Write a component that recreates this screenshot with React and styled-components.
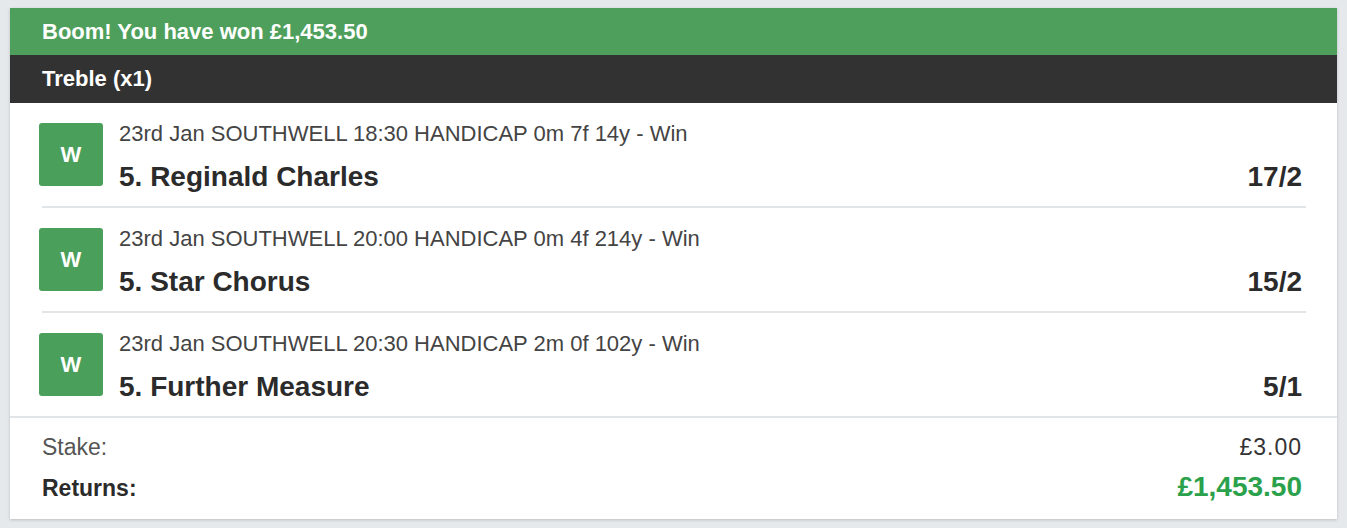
import React from "react";
import styled, { createGlobalStyle } from "styled-components";

const Global = createGlobalStyle`
  html, body { margin: 0; padding: 0; background: #e6e9ec; }
  body { font-family: "Liberation Sans", Arial, Helvetica, sans-serif; }
  * { box-sizing: border-box; }
`;

const Page = styled.div`
  padding: 8px 10px 10px 10px;
`;

const Card = styled.div`
  background: #fff;
  box-shadow: 0 1px 3px rgba(0, 0, 0, 0.18);
`;

const Banner = styled.div`
  height: ${(p) => p.$h}px;
  display: flex;
  align-items: center;
  padding: 0 32px;
  background: ${(p) => p.$bg};
  color: #fff;
  font-weight: 700;
  font-size: 22px;
`;

const Legs = styled.div`
  border-bottom: 2px solid #e2e5e8;
`;

const Leg = styled.div`
  height: 103px;
  margin: 0 31px 0 29px;
  padding: 20px 0;
  display: flex;
  align-items: flex-start;
  gap: 16px;
`;

const Sep = styled.div`
  height: 2px;
  background: #e2e5e8;
  margin: 0 31px 0 32px;
`;

const Badge = styled.div`
  width: 64px;
  height: 63px;
  flex: none;
  border-radius: 3px;
  background: #4a9f5a;
  color: #fff;
  font-weight: 700;
  font-size: 22px;
  display: flex;
  align-items: center;
  justify-content: center;
`;

const LegBody = styled.div`
  flex: 1;
  display: flex;
  flex-direction: column;
  margin-top: -2px;
`;

const Meta = styled.div`
  font-size: 22px;
  color: #444;
  line-height: 26px;
`;

const NameRow = styled.div`
  display: flex;
  justify-content: space-between;
  align-items: baseline;
  margin-top: 14px;
  padding-right: 4px;
  font-weight: 700;
  font-size: 28px;
  color: #2b2b2b;
  line-height: 32px;
`;

const Footer = styled.div`
  padding: 13px 35px 15px 32px;
  display: flex;
  flex-direction: column;
  gap: 8px;
`;

const SumRow = styled.div`
  display: flex;
  justify-content: space-between;
  align-items: baseline;
  line-height: 32px;
`;

const SumLabel = styled.span`
  font-size: 23px;
  color: ${(p) => (p.$strong ? "#2b2b2b" : "#555")};
  font-weight: ${(p) => (p.$strong ? 700 : 400)};
`;

const SumValue = styled.span`
  font-size: ${(p) => (p.$strong ? "28px" : "23px")};
  color: ${(p) => (p.$strong ? "#2ba14b" : "#333")};
  font-weight: ${(p) => (p.$strong ? 700 : 400)};
  letter-spacing: ${(p) => (p.$strong ? "0" : "1px")};
`;

const legs = [
  { meta: "23rd Jan SOUTHWELL 18:30 HANDICAP 0m 7f 14y - Win", name: "5. Reginald Charles", odds: "17/2" },
  { meta: "23rd Jan SOUTHWELL 20:00 HANDICAP 0m 4f 214y - Win", name: "5. Star Chorus", odds: "15/2" },
  { meta: "23rd Jan SOUTHWELL 20:30 HANDICAP 2m 0f 102y - Win", name: "5. Further Measure", odds: "5/1" },
];

export default function App() {
  return (
    <>
      <Global />
      <Page>
        <Card>
          <Banner $bg="#4e9f5c" $h={47}>Boom! You have won £1,453.50</Banner>
          <Banner $bg="#323232" $h={48}>Treble (x1)</Banner>
          <Legs>
            {legs.map((l, i) => (
              <React.Fragment key={i}>
                {i > 0 && <Sep />}
                <Leg>
                  <Badge>W</Badge>
                  <LegBody>
                    <Meta>{l.meta}</Meta>
                    <NameRow>
                      <span>{l.name}</span>
                      <span>{l.odds}</span>
                    </NameRow>
                  </LegBody>
                </Leg>
              </React.Fragment>
            ))}
          </Legs>
          <Footer>
            <SumRow>
              <SumLabel>Stake:</SumLabel>
              <SumValue>£3.00</SumValue>
            </SumRow>
            <SumRow>
              <SumLabel $strong>Returns:</SumLabel>
              <SumValue $strong>£1,453.50</SumValue>
            </SumRow>
          </Footer>
        </Card>
      </Page>
    </>
  );
}
